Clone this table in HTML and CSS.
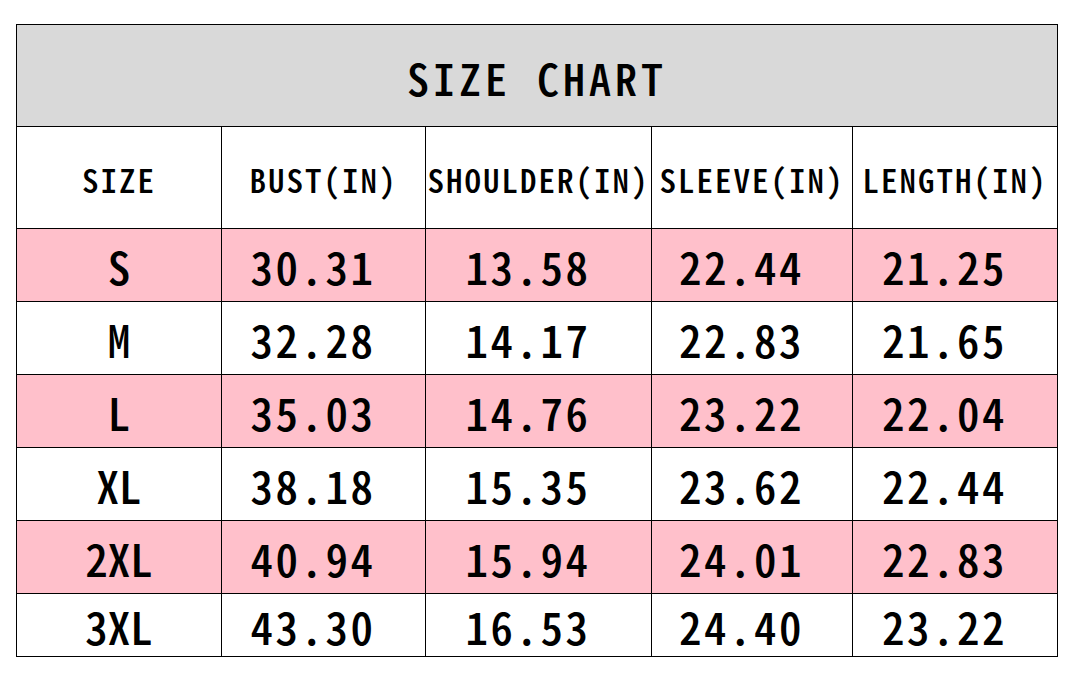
FILE: index.html
```html
<!DOCTYPE html>
<html>
<head>
<meta charset="utf-8">
<link rel="stylesheet" href="styles.css">
</head>
<body>
<div class="page">
  <div class="chart">
    <div class="title">SIZE CHART</div>
    <div class="head">SIZE</div>
    <div class="head">BUST(IN)</div>
    <div class="head">SHOULDER(IN)</div>
    <div class="head">SLEEVE(IN)</div>
    <div class="head">LENGTH(IN)</div>

    <div class="size pink">S</div>
    <div class="val pink">30.31</div>
    <div class="val pink">13.58</div>
    <div class="val pink">22.44</div>
    <div class="val pink">21.25</div>

    <div class="size">M</div>
    <div class="val">32.28</div>
    <div class="val">14.17</div>
    <div class="val">22.83</div>
    <div class="val">21.65</div>

    <div class="size pink">L</div>
    <div class="val pink">35.03</div>
    <div class="val pink">14.76</div>
    <div class="val pink">23.22</div>
    <div class="val pink">22.04</div>

    <div class="size">XL</div>
    <div class="val">38.18</div>
    <div class="val">15.35</div>
    <div class="val">23.62</div>
    <div class="val">22.44</div>

    <div class="size pink">2XL</div>
    <div class="val pink">40.94</div>
    <div class="val pink">15.94</div>
    <div class="val pink">24.01</div>
    <div class="val pink">22.83</div>

    <div class="size">3XL</div>
    <div class="val">43.30</div>
    <div class="val">16.53</div>
    <div class="val">24.40</div>
    <div class="val">23.22</div>
  </div>
</div>
</body>
</html>
```
FILE: styles.css
```css
html, body {
  margin: 0;
  padding: 0;
  background: #ffffff;
}
.page {
  padding: 24px 0 0 16px;
}
.chart {
  display: grid;
  grid-template-columns: 204px 203px 225px 200px 204px;
  grid-template-rows: 101px 101px 72px 72px 72px 72px 72px 62px;
  gap: 1px;
  padding: 1px;
  width: 1040px;
  background: #000000;
  font-family: "Noto Sans CJK SC", "Noto Sans Mono CJK SC", sans-serif;
  font-feature-settings: "hwid";
  font-weight: 500;
  color: #000000;
  line-height: normal;
}
.chart > div {
  background: #ffffff;
  display: flex;
  align-items: center;
  justify-content: center;
  white-space: nowrap;
}
.chart > .pink {
  background: #ffc0cb;
}
.title {
  grid-column: 1 / 6;
  background: #d9d9d9 !important;
  font-size: 44px;
  letter-spacing: 4px;
  padding-top: 3px;
}
.head {
  font-size: 33px;
  letter-spacing: 2px;
  padding-top: 2px;
}
.size {
  font-size: 45px;
  padding-top: 1px;
}
.val {
  font-size: 45px;
  letter-spacing: 2.5px;
  padding-top: 1px;
  padding-right: 21px;
}
```
